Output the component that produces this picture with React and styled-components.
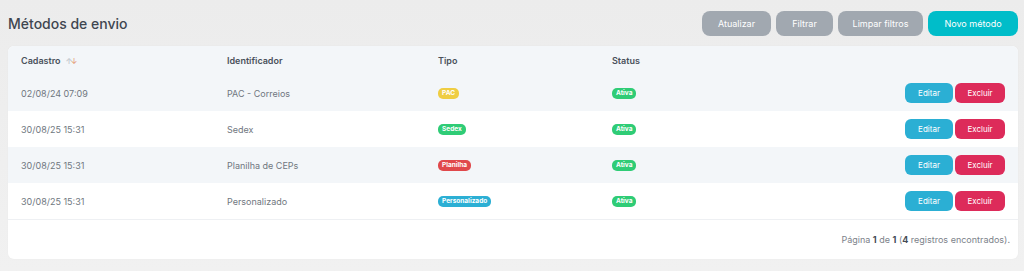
import React from "react";
import styled, { createGlobalStyle } from "styled-components";

const GlobalStyle = createGlobalStyle`
  html, body {
    margin: 0;
    padding: 0;
    background: #efefef;
    font-family: "Inter", "Open Sans", sans-serif;
  }
`;

const Page = styled.div`
  padding: 11px 6px 13px 8px;
  background: linear-gradient(#ececec, #f1f1f1);
  min-height: 271px;
  box-sizing: border-box;
`;

const TopBar = styled.div`
  display: flex;
  align-items: center;
  justify-content: space-between;
  height: 25px;
  margin-bottom: 10px;
`;

const Title = styled.h1`
  margin: 0;
  font-size: 14px;
  font-weight: 500;
  color: #3f4650;
`;

const Actions = styled.div`
  display: flex;
  gap: 5px;
`;

const TopButton = styled.button`
  width: ${(p) => p.$w}px;
  height: 25px;
  padding: 0;
  border: none;
  border-radius: 8px;
  background: ${(p) => (p.$primary ? "#00bdc9" : "#a1a8b0")};
  color: #fff;
  font-family: inherit;
  font-size: 9px;
  cursor: pointer;
`;

const Card = styled.div`
  background: #fff;
  border-radius: 6px;
  overflow: hidden;
  box-shadow: 0 0 2px rgba(0, 0, 0, 0.04);
`;

const Table = styled.div`
  display: grid;
  grid-template-columns: 219px 211px 174px 1fr auto;
`;

const Row = styled.div`
  display: contents;
  & > div {
    background: ${(p) => (p.$alt ? "#f3f6f9" : "#fff")};
    height: ${(p) => (p.$head ? 29 : 36)}px;
    border-bottom: ${(p) => (p.$last ? "1px solid #eef0f3" : "none")};
  }
`;

const Cell = styled.div`
  display: flex;
  align-items: center;
  padding-left: ${(p) => (p.$first ? 13 : 0)}px;
  padding-right: ${(p) => (p.$end ? 13 : 0)}px;
  justify-content: ${(p) => (p.$end ? "flex-end" : "flex-start")};
  font-size: 9px;
  color: #707780;
  gap: 2px;
`;

const HeadCell = styled(Cell)`
  font-weight: 600;
  color: #4a515b;
`;

const Sort = styled.span`
  font-size: 8px;
  margin-left: 3px;
  letter-spacing: -2px;
  color: #c3c8cf;
  & b {
    color: #e49a74;
    font-weight: 400;
  }
`;

const Badge = styled.span`
  display: inline-block;
  background: ${(p) => p.$color};
  color: #fff;
  font-size: 6.5px;
  font-weight: 700;
  padding: 2px 4px;
  border-radius: 5px;
  line-height: 7px;
`;

const RowButton = styled.button`
  width: ${(p) => p.$w}px;
  height: 20px;
  border: none;
  border-radius: 6px;
  background: ${(p) => p.$color};
  color: #fff;
  font-family: inherit;
  font-size: 8px;
  cursor: pointer;
`;

const Footer = styled.div`
  height: 39px;
  display: flex;
  align-items: center;
  justify-content: flex-end;
  padding-right: 8px;
  font-size: 9px;
  color: #7c828a;
  & b {
    font-weight: 700;
    color: #444b55;
  }
`;

const badgeColors = {
  PAC: "#efcd43",
  Sedex: "#2fcc76",
  Planilha: "#e0484b",
  Personalizado: "#2cafd4",
};

const rows = [
  { date: "02/08/24 07:09", name: "PAC - Correios", type: "PAC" },
  { date: "30/08/25 15:31", name: "Sedex", type: "Sedex" },
  { date: "30/08/25 15:31", name: "Planilha de CEPs", type: "Planilha" },
  { date: "30/08/25 15:31", name: "Personalizado", type: "Personalizado" },
];

export default function App() {
  return (
    <>
      <GlobalStyle />
      <Page>
        <TopBar>
          <Title>Métodos de envio</Title>
          <Actions>
            <TopButton $w={69}>Atualizar</TopButton>
            <TopButton $w={57}>Filtrar</TopButton>
            <TopButton $w={85}>Limpar filtros</TopButton>
            <TopButton $primary $w={90}>
              Novo método
            </TopButton>
          </Actions>
        </TopBar>
        <Card>
          <Table>
            <Row $head $alt>
              <HeadCell $first>
                Cadastro
                <Sort>
                  ↑<b>↓</b>
                </Sort>
              </HeadCell>
              <HeadCell>Identificador</HeadCell>
              <HeadCell>Tipo</HeadCell>
              <HeadCell>Status</HeadCell>
              <HeadCell $end />
            </Row>
            {rows.map((r, i) => (
              <Row key={i} $alt={i % 2 === 0} $last={i === rows.length - 1}>
                <Cell $first>{r.date}</Cell>
                <Cell>{r.name}</Cell>
                <Cell>
                  <Badge $color={badgeColors[r.type]}>{r.type}</Badge>
                </Cell>
                <Cell>
                  <Badge $color="#2fcc76">Ativa</Badge>
                </Cell>
                <Cell $end>
                  <RowButton $w={48} $color="#2bafd4">
                    Editar
                  </RowButton>
                  <RowButton $w={50} $color="#dd2b5a">
                    Excluir
                  </RowButton>
                </Cell>
              </Row>
            ))}
          </Table>
          <Footer>
            <span>
              Página <b>1</b> de <b>1</b> (<b>4</b> registros encontrados).
            </span>
          </Footer>
        </Card>
      </Page>
    </>
  );
}
